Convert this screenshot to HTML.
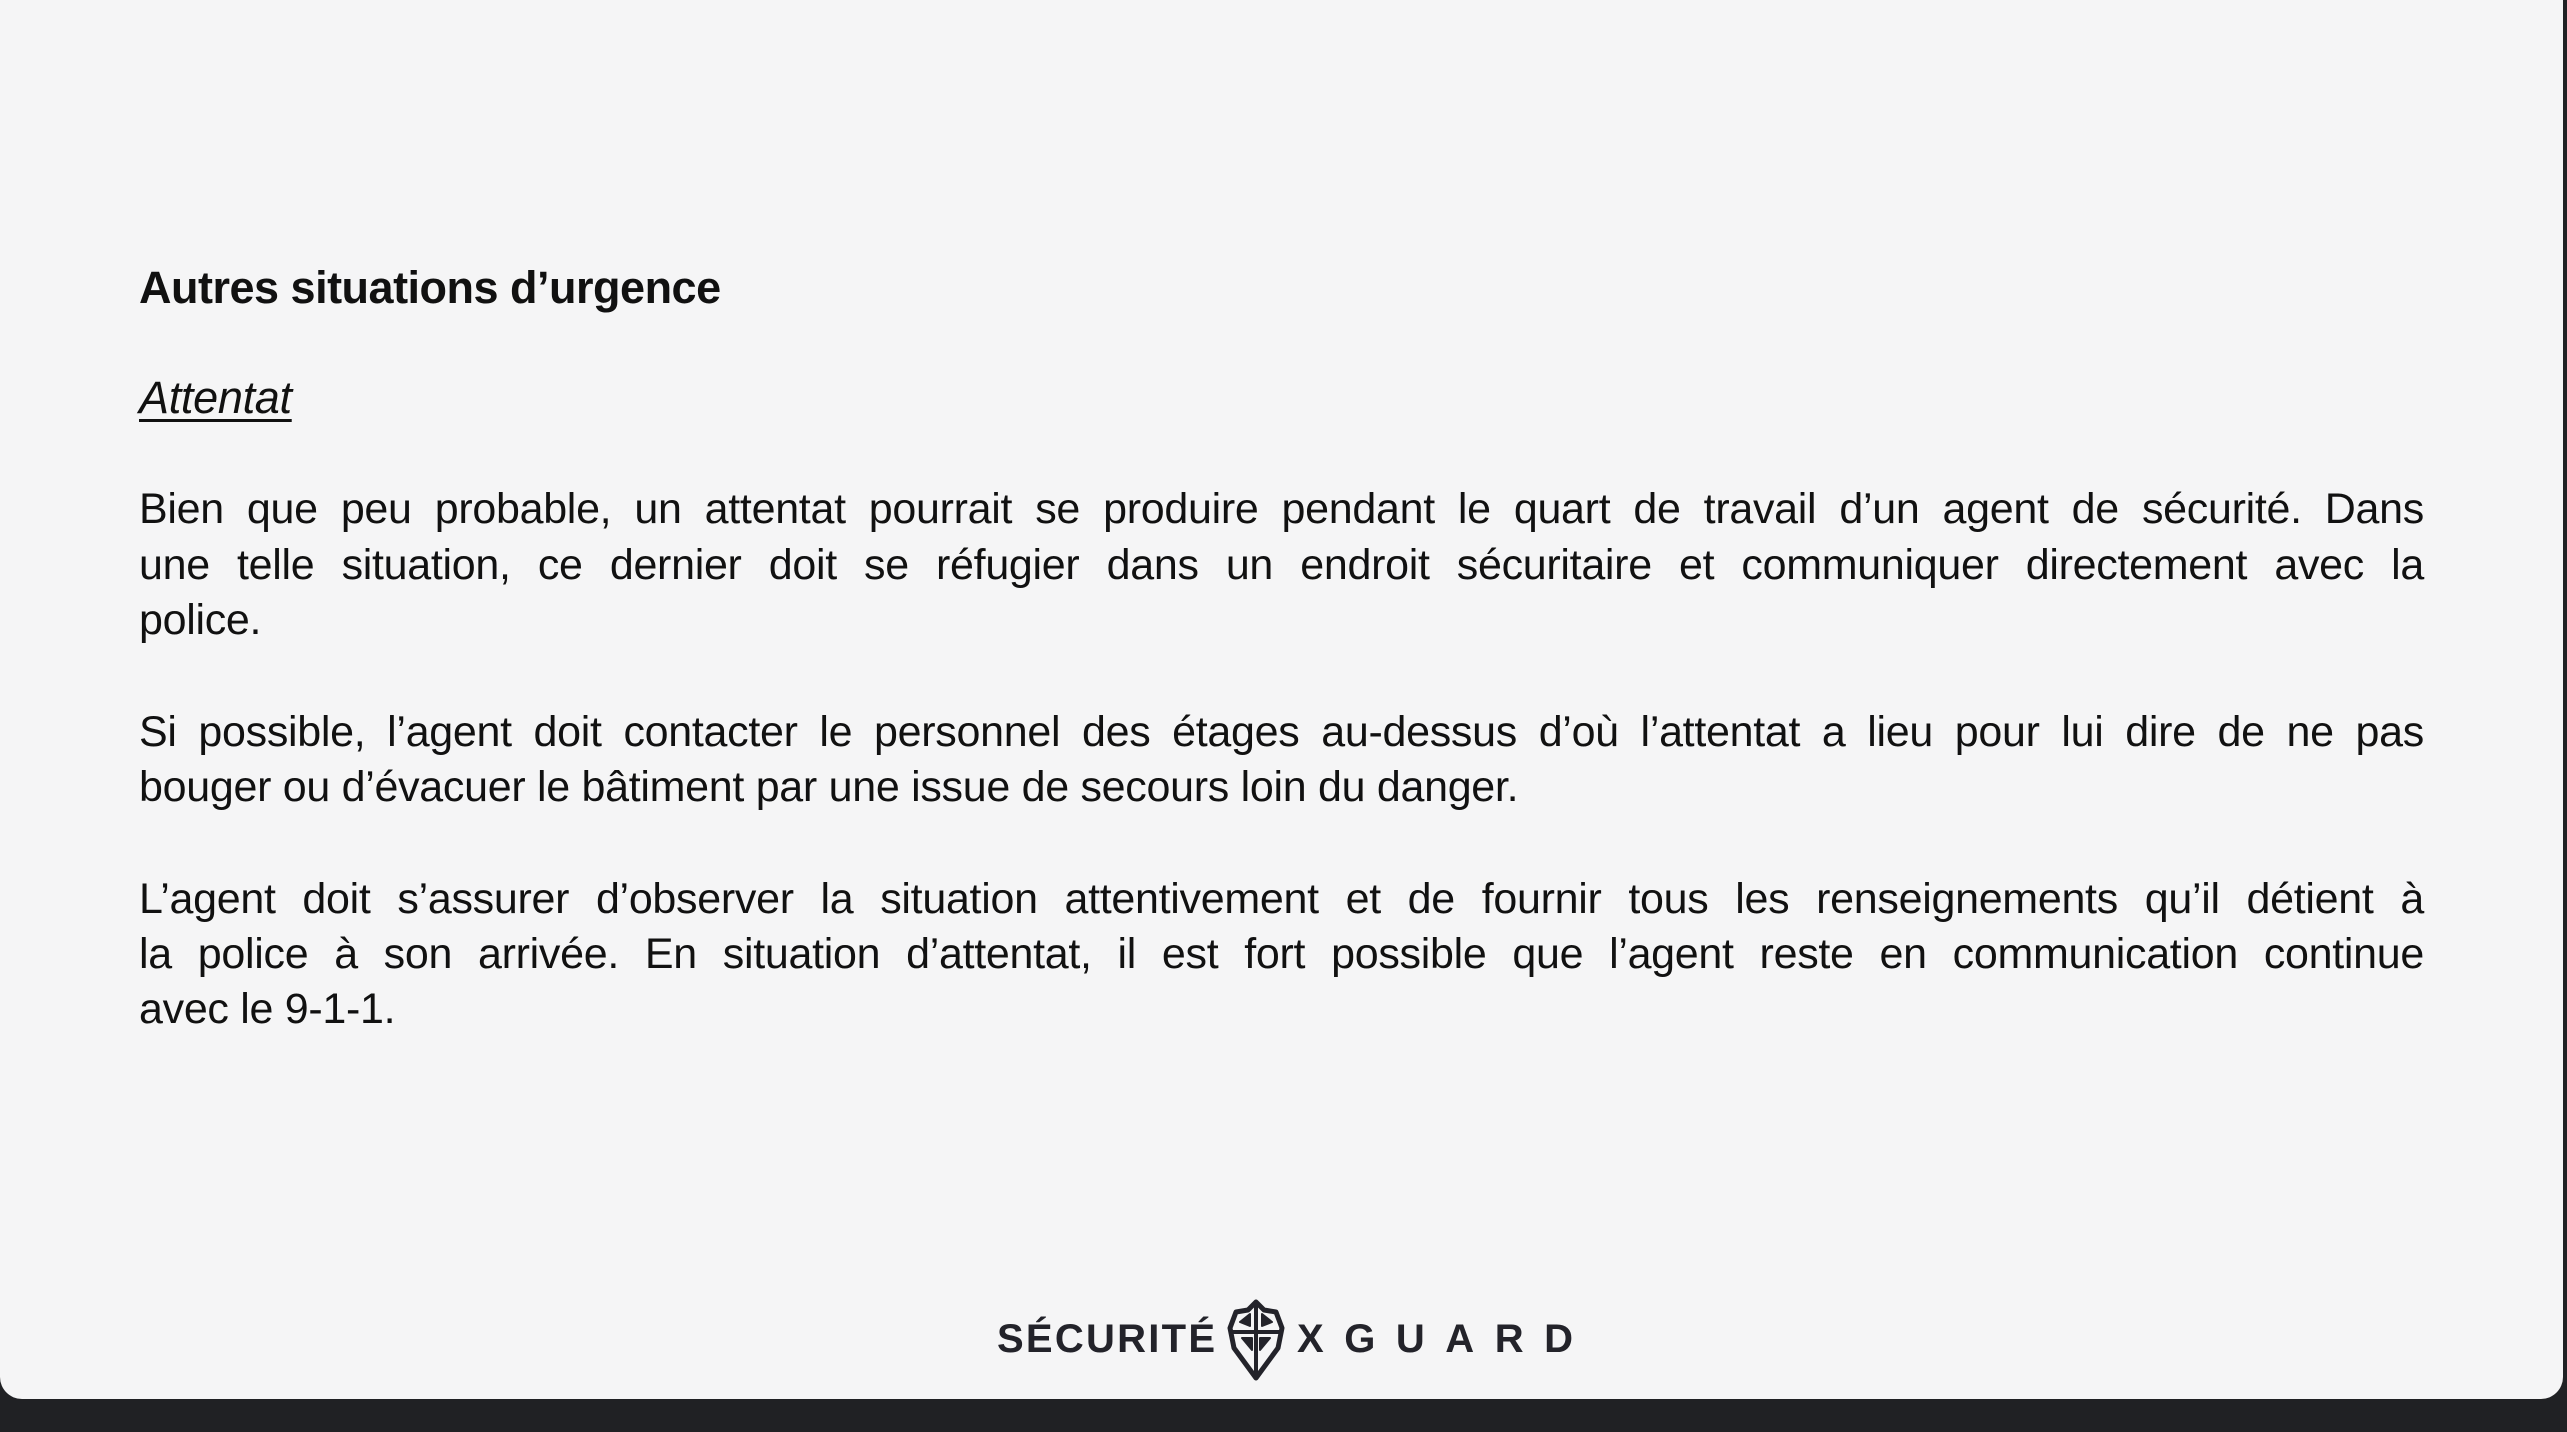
<!DOCTYPE html>
<html><head><meta charset="utf-8"><style>
html,body{margin:0;padding:0;width:2567px;height:1432px;overflow:hidden;background:#202124;}
.panel{position:absolute;left:0;top:0;width:2563px;height:1399px;background:#f5f5f6;border-radius:0 0 22px 22px;}
h1{position:absolute;left:139px;top:262px;margin:0;font:bold 45px "Liberation Sans",sans-serif;color:#111;letter-spacing:-0.5px}
.sub{position:absolute;left:139px;top:372px;font:italic 45px "Liberation Sans",sans-serif;text-decoration:underline;text-decoration-thickness:3px;text-underline-offset:6px;color:#111;letter-spacing:-0.3px}
.l{position:absolute;left:139px;width:2285px;font:43px "Liberation Sans",sans-serif;color:#111;text-align:justify;text-align-last:justify;white-space:nowrap;height:56px;line-height:56px;letter-spacing:-0.3px}
.l.e{text-align-last:left}
</style></head><body>
<div class="panel"></div>
<h1>Autres situations d’urgence</h1>
<div class="sub">Attentat</div>
<div class="l" style="top:481px">Bien que peu probable, un attentat pourrait se produire pendant le quart de travail d’un agent de sécurité. Dans</div>
<div class="l" style="top:537px">une telle situation, ce dernier doit se réfugier dans un endroit sécuritaire et communiquer directement avec la</div>
<div class="l e" style="top:592px">police.</div>
<div class="l" style="top:704px">Si possible, l’agent doit contacter le personnel des étages au-dessus d’où l’attentat a lieu pour lui dire de ne pas</div>
<div class="l e" style="top:759px">bouger ou d’évacuer le bâtiment par une issue de secours loin du danger.</div>
<div class="l" style="top:871px">L’agent doit s’assurer d’observer la situation attentivement et de fournir tous les renseignements qu’il détient à</div>
<div class="l" style="top:926px">la police à son arrivée. En situation d’attentat, il est fort possible que l’agent reste en communication continue</div>
<div class="l e" style="top:981px">avec le 9-1-1.</div>
<svg style="position:absolute;left:990px;top:1295px" width="600" height="90" viewBox="0 0 600 90">
<text x="7" y="57" font-family="Liberation Sans, sans-serif" font-weight="bold" font-size="40" fill="#23232a" textLength="218" lengthAdjust="spacing">SÉCURITÉ</text>
<text x="307" y="57" font-family="Liberation Sans, sans-serif" font-weight="bold" font-size="40" fill="#23232a" textLength="276" lengthAdjust="spacing">XGUARD</text>
<g transform="translate(236,3)" fill="none" stroke="#23232a" stroke-width="5" stroke-linejoin="round">
<path d="M30 4 L38 12 L50 14 L56 30 L52 50 L30 80 L8 50 L4 30 L10 14 L22 12 Z"/>
<path d="M30 6 V78 M5 34 H55" stroke-width="4"/>
<path d="M14 24 L24 16 V28 Z M46 24 L36 16 V28 Z M16 40 H26 L26 52 Z M44 40 H34 L34 52 Z" fill="#23232a" stroke-width="2"/>
</g>
</svg>
</body></html>
